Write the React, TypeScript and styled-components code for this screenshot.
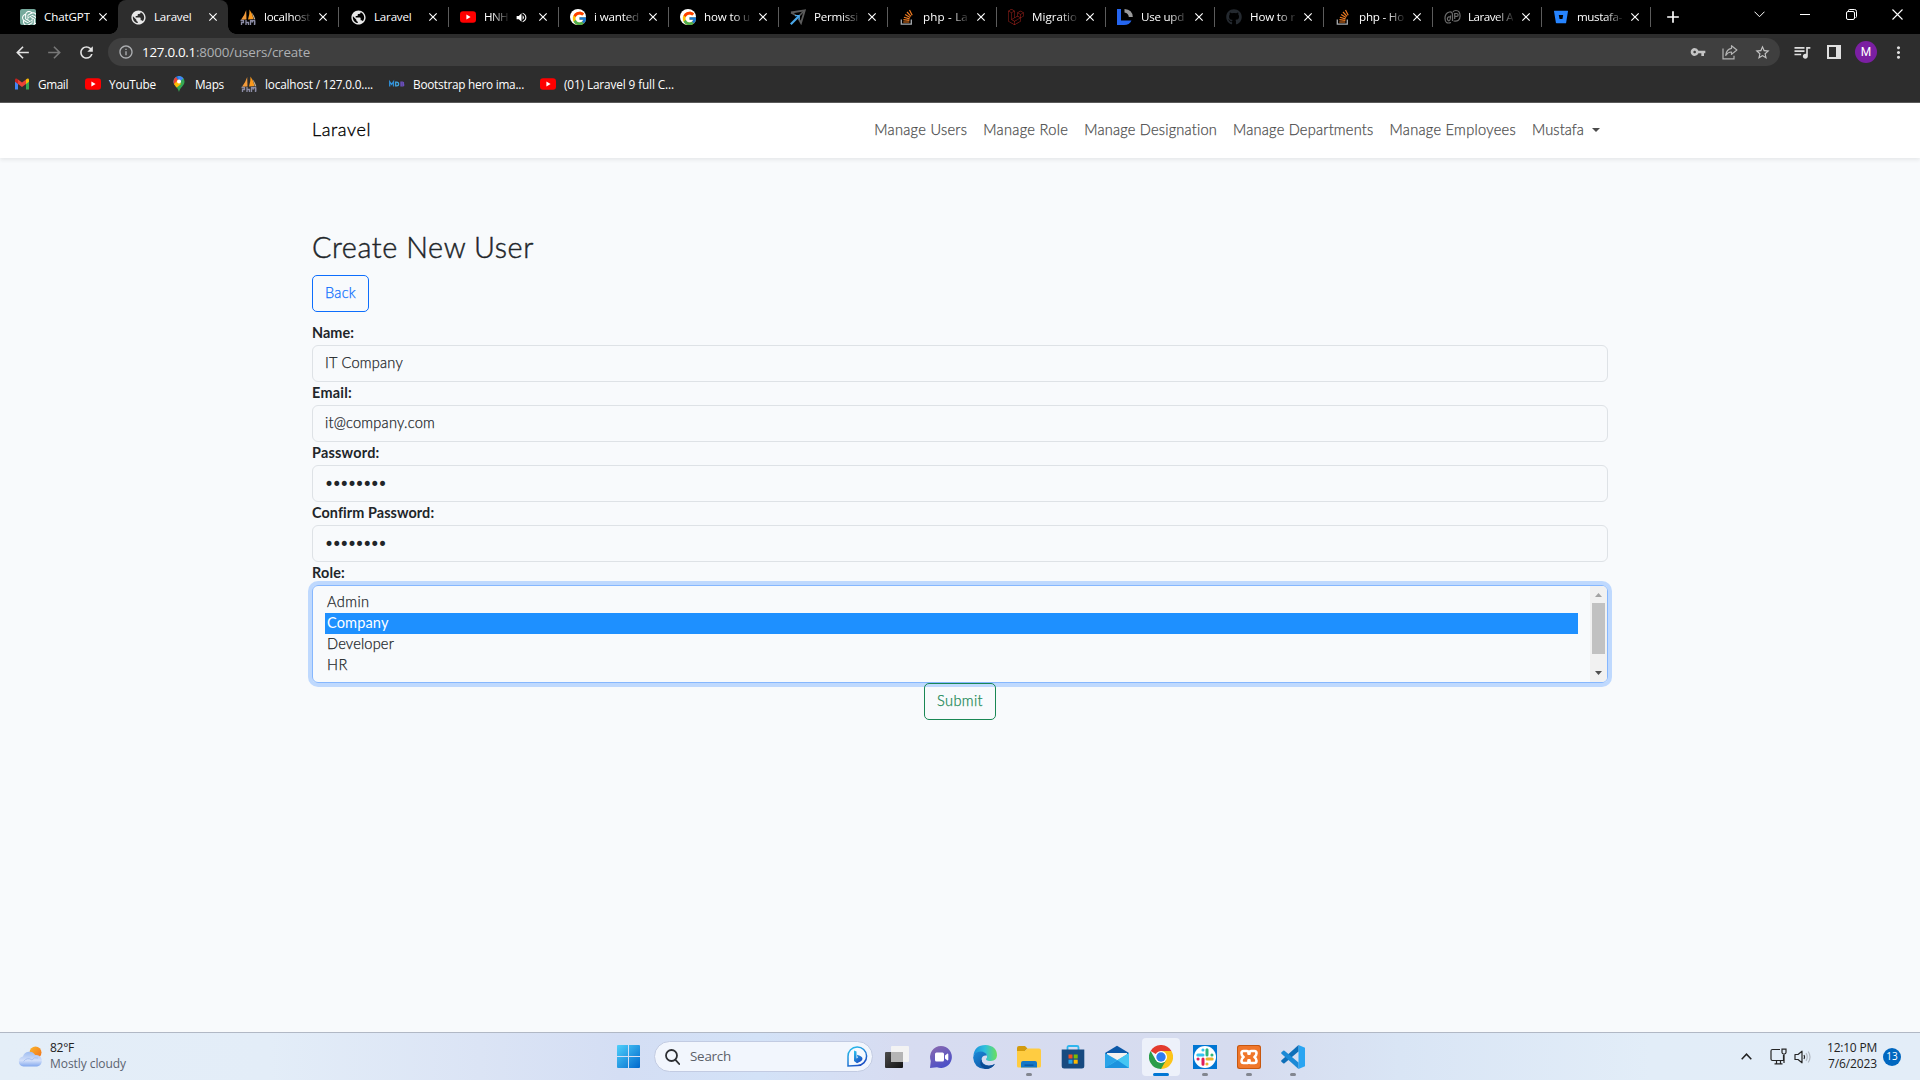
import React, { useLayoutEffect, useRef, useState } from 'react';
import styled, { createGlobalStyle } from 'styled-components';
import {
  MdArrowBack,
  MdArrowForward,
  MdClose,
  MdAdd,
  MdInfoOutline,
  MdMoreVert,
  MdPublic,
  MdQueueMusic,
  MdRefresh,
  MdStarBorder,
  MdVolumeUp,
  MdVpnKey,
} from 'react-icons/md';
import { FcGoogle } from 'react-icons/fc';
import { FaGithub } from 'react-icons/fa';
import { SiBitbucket, SiLaravel, SiOpenai } from 'react-icons/si';

const ui = '"Open Sans", "Noto Sans", sans-serif';
const web = 'Lato, "Open Sans", sans-serif';

const GlobalStyle = createGlobalStyle`
  * { box-sizing: border-box; }
  html, body { margin: 0; padding: 0; overflow: hidden; }
  body { font-family: ${web}; background: #f8fafc; }
  svg { display: block; flex: none; }
`;

/* Text tracked so that it takes the given width */
const TrackedText = styled.span`
  display: inline-block;
  white-space: pre;
  flex: none;
`;

function Tracked({ w, children }: { w: number; children: string }) {
  const ref = useRef<HTMLSpanElement>(null);
  const [spacing, setSpacing] = useState(0);
  useLayoutEffect(() => {
    if (ref.current) {
      const natural = ref.current.getBoundingClientRect().width - spacing * children.length;
      setSpacing((w - natural) / children.length);
    }
  }, [w, children]);
  return (
    <TrackedText ref={ref} style={{ letterSpacing: `${spacing}px` }}>
      {children}
    </TrackedText>
  );
}

const Screen = styled.div`
  width: 1920px;
  height: 1080px;
  display: flex;
  flex-direction: column;
  overflow: hidden;
`;

/* ---------- Browser ---------- */

const TabStrip = styled.div`
  height: 34px;
  flex: none;
  display: flex;
  align-items: stretch;
  padding-left: 8px;
  background: #000;
  font-family: ${ui};
`;

const Tab = styled.div<{ $w: number; $active?: boolean; $line?: boolean }>`
  position: relative;
  width: ${(p) => p.$w}px;
  flex: none;
  display: flex;
  align-items: center;
  padding-left: 12px;
  color: #fff;
  background: ${(p) => (p.$active ? '#2d2d2d' : 'transparent')};
  border-radius: 8px 8px 0 0;
  ${(p) =>
    p.$line &&
    `&::after { content: ''; position: absolute; right: -1px; top: 7px; width: 1px; height: 20px; background: #5c5c5c; }`}
  ${(p) =>
    p.$active &&
    `&::before, &::after { content: ''; position: absolute; bottom: 0; width: 8px; height: 8px; }
     &::before { left: -8px; background: radial-gradient(circle at 0 0, transparent 7.5px, #2d2d2d 8px); }
     &::after { right: -8px; background: radial-gradient(circle at 100% 0, transparent 7.5px, #2d2d2d 8px); }`}
`;

const Favicon = styled.div`
  width: 16px;
  height: 16px;
  display: flex;
  align-items: center;
  justify-content: center;
`;

const TabTitle = styled.div<{ $w: number; $fade?: boolean }>`
  width: ${(p) => p.$w}px;
  margin-left: 8px;
  overflow: hidden;
  font-size: 11.6px;
  line-height: 18px;
  ${(p) => p.$fade && `mask-image: linear-gradient(to right, #000 ${p.$w - 17}px, rgba(0,0,0,.12) 100%);`}
`;

const TabSound = styled.div`
  width: 22px;
  padding-left: 5px;
  display: flex;
  justify-content: center;
`;

const TabClose = styled.div`
  width: 16px;
  margin-left: 5px;
  display: flex;
  justify-content: center;
  font-size: 14px;
`;

const NewTab = styled.div`
  width: 45px;
  display: flex;
  align-items: center;
  justify-content: center;
  color: #fff;
  font-size: 20px;
`;

const WindowControls = styled.div`
  margin-left: auto;
  display: flex;
  height: 28px;
  align-items: center;
  color: #fff;
`;

const WindowControl = styled.div`
  width: 46px;
  display: flex;
  justify-content: center;
`;

const Toolbar = styled.div`
  height: 36px;
  flex: none;
  display: flex;
  align-items: center;
  background: #2d2d2d;
  color: #dedede;
  font-family: ${ui};
`;

const NavButtons = styled.div`
  width: 108px;
  padding-left: 6px;
  display: flex;
`;

const NavButton = styled.div<{ $dim?: boolean }>`
  width: 32px;
  display: flex;
  justify-content: center;
  font-size: 19px;
  color: ${(p) => (p.$dim ? '#777' : '#e4e4e4')};
`;

const AddressBar = styled.div`
  width: 1672px;
  height: 28px;
  border-radius: 14px;
  background: #3f3f3f;
  display: flex;
  align-items: center;
  padding: 0 2px 0 10px;
  font-size: 13.4px;
  color: #aeb0b3;
`;

const Host = styled.span`
  color: #fff;
  margin-left: 8px;
`;

const AddressActions = styled.div`
  margin-left: auto;
  display: flex;
  color: #c4c4c4;
`;

const ToolSlot = styled.div`
  width: 32px;
  display: flex;
  align-items: center;
  justify-content: center;
`;

const ToolActions = styled.div`
  margin-left: 6px;
  display: flex;
  align-items: center;
`;

const Avatar = styled.div`
  width: 22px;
  height: 22px;
  border-radius: 50%;
  background: #7b1fa2;
  color: #fff;
  font: 400 12px/22px Roboto, sans-serif;
  text-align: center;
`;

const Bookmarks = styled.div`
  height: 33px;
  flex: none;
  display: flex;
  align-items: center;
  padding: 0 0 5px 14px;
  background: #2d2d2d;
  border-bottom: 1px solid #5b5b5b;
  color: #fff;
  font: 11.8px/18px ${ui};
`;

const Bookmark = styled.div<{ $w: number }>`
  width: ${(p) => p.$w}px;
  flex: none;
  display: flex;
  align-items: center;
  gap: 8px;
`;

/* ---------- Web page ---------- */

const Page = styled.div`
  height: 929px;
  flex: none;
  background: #f8fafc;
  color: #212529;
  font-size: 14.6px;
  font-weight: 300;
  line-height: 22px;
  -webkit-text-stroke: 0.25px currentColor;
`;

const Navbar = styled.nav`
  height: 55px;
  padding: 0 320px 1px 312px;
  display: flex;
  align-items: center;
  justify-content: space-between;
  background: #fff;
  box-shadow: 0 2px 4px rgba(0, 0, 0, 0.075);
`;

const Brand = styled.div`
  padding-bottom: 2px;
  font-size: 18px;
  color: #000;
  -webkit-text-stroke-width: 0.35px;
`;

const NavLinks = styled.div`
  display: flex;
  gap: 16px;
  color: #4d4d4d;
`;

const Dropdown = styled.div`
  display: flex;
  align-items: center;
  gap: 8px;
`;

const Caret = styled.i`
  border: 4px solid transparent;
  border-top-color: #4b4b4b;
  border-bottom: 0;
`;

const Content = styled.main`
  padding: 72px 312px 0;
`;

const Title = styled.h2`
  margin: 0 0 10px;
  font-size: 28.8px;
  font-weight: 300;
  line-height: 35px;
  -webkit-text-stroke-width: 0.45px;
`;

const OutlineButton = styled.div<{ $w: number; $color: string }>`
  width: ${(p) => p.$w}px;
  height: 37px;
  padding-bottom: 1px;
  display: flex;
  align-items: center;
  justify-content: center;
  border: 1px solid ${(p) => p.$color};
  border-radius: 5px;
  color: ${(p) => p.$color};
`;

const Form = styled.form`
  margin-top: 10px;
  display: flex;
  flex-direction: column;
`;

const Label = styled.label`
  height: 23px;
  font-size: 14.4px;
  font-weight: 700;
  -webkit-text-stroke-width: 0;
`;

const Field = styled.div`
  height: 37px;
  padding: 6px 12px;
  border: 1px solid #dee2e6;
  border-radius: 6px;
`;

const Bullets = styled.div`
  margin-left: -1px;
  font: 17px/25px "DejaVu Sans", sans-serif;
  -webkit-text-stroke-width: 0;
`;

const SelectBox = styled.div`
  height: 98px;
  display: flex;
  border: 1px solid #86b7fe;
  border-radius: 6px;
  box-shadow: 0 0 0 4px #bfd9fe;
  overflow: hidden;
`;

const Options = styled.div`
  flex: 1;
  padding: 6px 12px 0;
`;

const Option = styled.div<{ $selected?: boolean }>`
  height: 21px;
  padding-left: 2px;
  line-height: 20px;
  color: ${(p) => (p.$selected ? '#fff' : '#212529')};
  background: ${(p) => (p.$selected ? '#1e90ff' : 'transparent')};
  ${(p) => p.$selected && 'font-weight: 400; -webkit-text-stroke-width: 0;'}
`;

const Scrollbar = styled.div`
  width: 17px;
  padding: 7px 2px 6px;
  display: flex;
  flex-direction: column;
  align-items: center;
  background: #f1f1f1;
`;

const Thumb = styled.div`
  width: 13px;
  height: 51px;
  margin: 6px 0 17px;
  background: #c1c1c1;
`;

const SubmitRow = styled.div`
  display: flex;
  justify-content: center;
`;

/* ---------- Taskbar ---------- */

const Taskbar = styled.div`
  height: 48px;
  flex: none;
  display: flex;
  align-items: center;
  border-top: 1px solid #b1b8c5;
  background: linear-gradient(90deg, #e4eef8 0, #e3edf8 270px, #dbe4f5 480px, #d4def4 620px, #d3e2f7 760px, #d7dcf1 900px, #d6dcef 1250px, #d9e5f5 1400px, #e2edf8 1650px, #e3edf8 100%);
  font: 12px/16px ${ui};
  color: #222;
`;

const Weather = styled.div`
  width: 611px;
  padding-left: 18px;
  display: flex;
  align-items: center;
  gap: 6px;
`;

const Lines = styled.div<{ $right?: boolean }>`
  padding-bottom: 2px;
  display: flex;
  flex-direction: column;
  align-items: ${(p) => (p.$right ? 'flex-end' : 'flex-start')};
`;

const Muted = styled.span`
  color: #5b6370;
`;

const StartSlot = styled.div`
  width: 43px;
  padding-left: 6px;
`;

const SearchPill = styled.div`
  width: 219px;
  height: 31px;
  display: flex;
  align-items: center;
  padding: 0 4px 0 10px;
  border: 1px solid #c2cbe2;
  border-radius: 16px;
  background: #f2f6fd;
  font-size: 13.4px;
  color: #5c6068;
`;

const SearchText = styled.div`
  flex: 1;
  margin-left: 10px;
  padding-bottom: 1px;
`;

const Apps = styled.div`
  display: flex;
  margin-left: 5px;
  gap: 6px;
`;

const AppSlot = styled.div<{ $active?: boolean }>`
  position: relative;
  width: 38px;
  height: 38px;
  display: flex;
  align-items: center;
  justify-content: center;
  border-radius: 4px;
  background: ${(p) => (p.$active ? '#edf1fa' : 'transparent')};
`;

const Indicator = styled.i<{ $active?: boolean }>`
  position: absolute;
  bottom: 0;
  left: 50%;
  transform: translateX(-50%);
  width: ${(p) => (p.$active ? 16 : 6)}px;
  height: 3px;
  border-radius: 2px;
  background: ${(p) => (p.$active ? '#0076d4' : '#82868f')};
`;

const Tray = styled.div`
  margin-left: auto;
  padding-right: 19px;
  display: flex;
  align-items: center;
`;

const TrayIcons = styled.div`
  display: flex;
  align-items: center;
  margin-right: 16px;
`;

const Gap = styled.div<{ $w: number }>`
  width: ${(p) => p.$w}px;
`;

const Badge = styled.div`
  width: 18px;
  height: 18px;
  margin-left: 6px;
  border-radius: 50%;
  background: #0067c0;
  color: #fff;
  font-size: 10px;
  line-height: 17px;
  text-align: center;
`;

/* ---------- Icons ---------- */

const ChatGptIcon = () => (
  <svg width="16" height="16" viewBox="0 0 16 16">
    <rect width="16" height="16" rx="2" fill="#75a99c" />
    <SiOpenai x={2} y={2} width={12} height={12} color="#fff" />
  </svg>
);

const GlobeIcon = () => <MdPublic size={17} color="#e8e8e8" />;

const SailIcon = () => (
  <svg width="16" height="16" viewBox="0 0 16 16">
    <path d="M6.200 1 6.500 10.500 1 10.800Q4.500 6.500 6.200 1Z" fill="#f29a3a" />
    <path d="M9.500.5Q12.800 5 13.500 10L8 10.400Q9.800 5 9.500.5Z" fill="#f8981d" />
    <path d="M11.500 3Q14.500 7 15.300 10.300L14 10.300Z" fill="#c9b79c" />
    <path d="M.5 11.500h3v2h-2V16M6 11v5M6 13.500h2.500V16M10.500 16v-4.500h1.500v2l1-2h1.500V16M14.800 11.500v4" stroke="#8b8ca5" strokeWidth="1.300" fill="none" />
  </svg>
);

const YouTubeIcon = () => (
  <svg width="16" height="16" viewBox="0 0 16 16">
    <rect y="2.300" width="16" height="11.400" rx="3" fill="#f00" />
    <path d="M6.400 5.600v4.800L10.600 8Z" fill="#fff" />
  </svg>
);

const GoogleIcon = () => (
  <svg width="16" height="16" viewBox="0 0 16 16">
    <circle cx="8" cy="8" r="8" fill="#fff" />
    <FcGoogle x={1.5} y={1.5} width={13} height={13} />
  </svg>
);

const SpatieIcon = () => (
  <svg width="16" height="16" viewBox="0 0 16 16" fill="none">
    <path d="M1 3.500 14.800 1.300 11 14 8.500 9.500" stroke="#5b5b5b" strokeWidth="1.800" />
    <path d="M1 3.500 6 6.500M14.500 1.500 8 8" stroke="#5b5b5b" strokeWidth="1.600" />
    <path d="M.8 15.200 9 7" stroke="#4aa8ea" strokeWidth="2.200" />
    <path d="M5 6.600h4.200v4" stroke="#4aa8ea" strokeWidth="1.200" />
  </svg>
);

const StackIcon = () => (
  <svg width="16" height="16" viewBox="0 0 16 16" fill="none">
    <path d="M2.300 10.500v4.700h10v-4.700" stroke="#a9adb1" strokeWidth="1.300" />
    <path d="M4.300 13h6M4.400 10.700l6 .6M4.900 8.200l5.700 1.700M6.100 5.500l5 3M8 3l4 4.400M10.500 1l2.700 5.300" stroke="#ef7c22" strokeWidth="1.200" />
  </svg>
);

const LogRocketIcon = () => (
  <svg width="16" height="16" viewBox="0 0 16 16">
    <path d="M0 0h4v11.500h10.500Q12.500 16 7 16H0Z" fill="#2566f0" />
    <path d="M7.500 0Q15.500.5 15.800 8h-4Q11.500 4 7.500 3.500Z" fill="#9b9b9b" />
  </svg>
);

const AtIcon = () => (
  <svg width="17" height="16" viewBox="0 0 17 16" fill="none" stroke="#6c6c6c" strokeWidth="1.200">
    <path d="M6.500 8.200a2 2 0 1 0-1.600 3.600q1.500 0 1.700-5.300M7 13.500Q1 15.500 1 9.300 1 4 5.500 3q3-.5 3 3v6" />
    <path d="M10.700 10V4.500h2a1.400 1.400 0 0 1 0 2.900h-2M9.500 12q6.500 1 6.600-5Q16 1.500 12 1.500 9.500 1.500 9 3" />
  </svg>
);

const GmailIcon = () => (
  <svg width="16" height="16" viewBox="0 0 16 16">
    <path d="M1 4v9.500h3V7Z" fill="#4285f4" />
    <path d="M12 7v6.500h3V4Z" fill="#34a853" />
    <path d="M1 4.500V4q.2-2 2-1.200L4 3.500V8L1 5.800Z" fill="#c5221f" />
    <path d="M12 3.500 13 2.800q1.800-.8 2 1.200v1.800L12 8Z" fill="#fbbc04" />
    <path d="M4 3.500 8 6.600l4-3.100V8l-4 3-4-3Z" fill="#ea4335" />
  </svg>
);

const MapsIcon = () => (
  <svg width="16" height="16" viewBox="0 0 16 16">
    <defs>
      <clipPath id="pin">
        <path d="M8 0a5.500 5.500 0 0 0-5.500 5.700C2.500 9.500 6.700 11 8 16 9.300 11 13.500 9.500 13.500 5.700A5.500 5.500 0 0 0 8 0Z" />
      </clipPath>
    </defs>
    <g clipPath="url(#pin)">
      <rect width="16" height="16" fill="#34a853" />
      <path d="M0 0h10L0 11Z" fill="#1a73e8" />
      <path d="M0 1h5l3 4-6 6Z" fill="#ea4335" />
      <path d="M7 0h9L8 6Z" fill="#4285f4" />
      <path d="M2 9 7 4l3 4-6 5Z" fill="#fbbc04" />
    </g>
    <circle cx="8" cy="5.500" r="2" fill="#fff" />
  </svg>
);

const MdbIcon = () => (
  <svg width="16" height="16" viewBox="0 0 16 16" fill="none" strokeWidth="1.300">
    <path d="M.7 10.500V5.800l1.900 2.600 1.900-2.600v4.700" stroke="#2f8fd8" />
    <path d="M6.700 6.200v3.700h1q1.900 0 1.900-1.850t-1.900-1.850Z" stroke="#41a5e0" />
    <path d="M12 6.200v3.700h1.500q1.300 0 1.300-.95t-1.300-.95H12h1.400q1.200 0 1.200-.9t-1.200-.9Z" stroke="#6c4fc0" />
  </svg>
);

const ShareIcon = () => (
  <svg width="16" height="16" viewBox="0 0 16 16" fill="none" stroke="#b4b4b4" strokeWidth="1.200">
    <path d="M1 4.500v10.300h11v-3" />
    <path d="M9.500 1.700 14.900 6 9.500 10.400V8Q6 7.800 3.700 11.300 4.500 5 9.500 4.300Z" strokeLinejoin="round" />
  </svg>
);

const SidePanelIcon = () => (
  <svg width="14" height="14" viewBox="0 0 14 14">
    <path d="M0 0h14v14H0ZM2 2v10h7V2Z" fill="#e0e0e0" fillRule="evenodd" />
  </svg>
);

const CloudIcon = () => (
  <svg width="26" height="22" viewBox="0 0 26 22">
    <defs>
      <linearGradient id="cloud" x1="0" y1="0" x2="0" y2="1">
        <stop offset="0" stopColor="#9fbdf0" />
        <stop offset=".6" stopColor="#d3e0fa" />
        <stop offset="1" stopColor="#82a8ee" />
      </linearGradient>
      <linearGradient id="sun" x1="0" y1="0" x2="1" y2="1">
        <stop offset="0" stopColor="#fbb62b" />
        <stop offset="1" stopColor="#f0701c" />
      </linearGradient>
    </defs>
    <circle cx="17.500" cy="6.500" r="6" fill="url(#sun)" />
    <path d="M5.500 20.500a5 5 0 0 1-.6-9.900 6.700 6.700 0 0 1 12.300-1.500A5.700 5.700 0 0 1 19.100 20.500Z" fill="url(#cloud)" />
    <path d="M5.500 15.500q4-5 8.500-1.500 2-3.500 6-2" stroke="#a9c2f2" fill="none" />
  </svg>
);

const WindowsIcon = () => (
  <svg width="23" height="23" viewBox="0 0 23 23">
    <defs>
      <linearGradient id="win" x1="0" y1="0" x2="1" y2="1">
        <stop offset="0" stopColor="#4fd0fb" />
        <stop offset="1" stopColor="#0067cc" />
      </linearGradient>
    </defs>
    <path d="M1 0h10v11H0V1Q0 0 1 0ZM12 0h10q1 0 1 1v10H12ZM0 12h11v11H1q-1 0-1-1ZM12 12h11v10q0 1-1 1H12Z" fill="url(#win)" />
  </svg>
);

const SearchIcon = () => (
  <svg width="15" height="16" viewBox="0 0 15 16" fill="none" stroke="#2d2f33" strokeWidth="1.800">
    <circle cx="6.500" cy="6.500" r="5.500" />
    <path d="M10.500 10.800 14.200 15" strokeLinecap="round" />
  </svg>
);

const BingIcon = () => (
  <svg width="21" height="21" viewBox="0 0 21 21">
    <defs>
      <linearGradient id="bing" x1="0" y1="0" x2=".6" y2="1">
        <stop offset="0" stopColor="#29c8f0" />
        <stop offset="1" stopColor="#1d50c4" />
      </linearGradient>
    </defs>
    <path d="M1 20V10.500A9.300 9.300 0 1 1 10.500 19.500Z" fill="#f6faff" stroke="url(#bing)" strokeWidth="1.500" />
    <path d="M7 4.500 9.500 5.500v7l1.300-.7-1-3q5.700 1.500 5.700 4 0 1.500-1.600 2.400L10 17.200 7 15Z" fill="url(#bing)" />
  </svg>
);

const TaskViewIcon = () => (
  <svg width="24" height="22" viewBox="0 0 24 22">
    <defs>
      <linearGradient id="tv" x1="0" y1="0" x2="1" y2="1">
        <stop offset="0" stopColor="#4c4c4c" />
        <stop offset="1" stopColor="#141414" />
      </linearGradient>
    </defs>
    <rect y="6" width="18" height="16" rx="1" fill="url(#tv)" />
    <rect x="6" width="18" height="16" rx="1" fill="#f3f3f3" />
    <path d="M6 6h12v10H7q-1 0-1-1Z" fill="#b5b5b5" />
  </svg>
);

const ChatIcon = () => (
  <svg width="24" height="24" viewBox="0 0 24 24">
    <defs>
      <linearGradient id="chat" x1="0" y1="0" x2=".5" y2="1">
        <stop offset="0" stopColor="#8d6bae" />
        <stop offset="1" stopColor="#4c50c7" />
      </linearGradient>
    </defs>
    <path d="M12 1a11 11 0 1 1-4 21.300L1 23l.8-7A11 11 0 0 1 12 1Z" fill="url(#chat)" />
    <rect x="6" y="7.500" width="9" height="9" rx="1.500" fill="#fff" />
    <path d="m16 10.500 2.500-2q.8 0 .8 1v5q0 1-.8 1l-2.500-2Z" fill="#fff" />
  </svg>
);

const EdgeIcon = () => (
  <svg width="24" height="24" viewBox="0 0 24 24">
    <defs>
      <linearGradient id="edge1" x1="0" y1=".4" x2="1" y2=".4">
        <stop offset="0" stopColor="#1b8fdc" />
        <stop offset=".5" stopColor="#2fc0dc" />
        <stop offset="1" stopColor="#6be05b" />
      </linearGradient>
      <linearGradient id="edge2" x1="0" y1="0" x2="1" y2="1">
        <stop offset="0" stopColor="#1a8ad9" />
        <stop offset="1" stopColor="#0c4a98" />
      </linearGradient>
    </defs>
    <path d="M.3 11Q1.500 0 12.500 0 24 .8 24 10.500q-.5 5-6 5.500-5 0-5-2 1.500-1.500 1-3.500Q12.500 7 8 7 2.500 7 .3 11Z" fill="url(#edge1)" />
    <path d="M.1 12.500Q1 6.500 7.500 6.500q5.500.3 6.500 4-5-.8-5.500 4 .5 5.500 7.500 6 3.500 0 6-1.800Q18.500 24 12 24 1 23.500.1 12.500Z" fill="url(#edge2)" />
    <path d="M8.500 14q-.5 6.500 7.500 7 3.500 0 6-2-3 5-9.500 5Q4.500 21 8.500 14Z" fill="#0b4b94" />
  </svg>
);

const FolderIcon = () => (
  <svg width="24" height="22" viewBox="0 0 24 22">
    <path d="M0 2q0-2 2-2h6l2.500 2.500L8 5H0Z" fill="#d39b0e" />
    <path d="M0 5h8l2.500-2.500H22q2 0 2 2V20q0 1.500-1.500 1.500h-21Q0 21.500 0 20Z" fill="#ffcc41" />
    <path d="M4 21.500V17q0-2 2-2h12q2 0 2 2v4.500Z" fill="#1477c6" />
    <path d="M7.500 18.500h9v1.300h-9Z" fill="#0b529c" />
  </svg>
);

const StoreIcon = () => (
  <svg width="24" height="24" viewBox="0 0 24 24">
    <path d="M6.500 5.500v-3q0-1.500 1.500-1.500h8q1.500 0 1.500 1.500v3" fill="none" stroke="#2fb6ee" strokeWidth="1.800" />
    <path d="M.7 4.500h22.600V21q0 2.500-2.500 2.500H3.200Q.7 23.500.7 21Z" fill="#174a80" />
    <path d="M7.500 9.500h4v4h-4Z" fill="#f25022" />
    <path d="M12.700 9.500h4v4h-4Z" fill="#7fba00" />
    <path d="M7.500 14.700h4v4h-4Z" fill="#26a3ea" />
    <path d="M12.700 14.700h4v4h-4Z" fill="#ffb900" />
  </svg>
);

const MailIcon = () => (
  <svg width="24" height="24" viewBox="0 0 24 24">
    <path d="M0 8 12 .8 24 8v3H0Z" fill="#0b58a8" />
    <path d="M2 8h20v3l-10 5.500L2 11Z" fill="#f4f2ef" />
    <path d="m0 8 12.500 7.200L24 8v15H0Z" fill="#2aa4e8" />
    <path d="m24 8L5 19.500 10 23h14Z" fill="#45c6f3" />
    <path d="m0 23 12.500-7.800L24 23Z" fill="#1c93de" />
  </svg>
);

const ChromeIcon = () => (
  <svg width="24" height="24" viewBox="0 0 24 24">
    <path d="M12 12 1.600 6A12 12 0 0 1 22.400 6Z" fill="#e33b2e" />
    <path d="M12 12V6h10.400A12 12 0 0 1 12 24Z" fill="#fcc419" />
    <path d="M1.600 6 6.800 15 12 17.500 17.200 15 12 24A12 12 0 0 1 1.600 6Z" fill="#2a9d4a" />
    <circle cx="12" cy="12" r="6" fill="#fff" />
    <circle cx="12" cy="12" r="4.700" fill="#2f7cf0" />
  </svg>
);

const SlackIcon = () => (
  <svg width="24" height="24" viewBox="0 0 24 24" fill="none" strokeLinecap="round" strokeWidth="3">
    <rect width="24" height="24" fill="#0176d3" />
    <circle cx="12" cy="12" r="11" fill="#fff" />
    <path d="M10 5h-.1M4.800 10h5.200" stroke="#36c5f0" />
    <path d="M14 4.800V10M19 10h-.1" stroke="#2eb67d" />
    <path d="M14 14h5.200M14 19h-.1" stroke="#ecb22e" />
    <path d="M10 14v5.200M5 14h.1" stroke="#e01e5a" />
  </svg>
);

const XamppIcon = () => (
  <svg width="24" height="24" viewBox="0 0 24 24">
    <rect width="24" height="24" rx="2.500" fill="#c7570f" />
    <rect x="1" y="1" width="22" height="22" rx="2" fill="#f0772b" />
    <path
      d="M9.700 6H6.500Q4.500 6 4.500 8.200T6.600 12Q4.500 13.600 4.500 15.800T6.500 18h3.200q1.800 0 1.800-1.800v-1h1v1q0 1.800 1.800 1.800h3.200q2 0 2-2.200T17.400 12q2.100-1.600 2.100-3.800T17.500 6h-3.200q-1.800 0-1.800 1.800v1h-1v-1Q11.500 6 9.700 6Z"
      fill="none"
      stroke="#fff"
      strokeWidth="2.600"
      strokeLinejoin="round"
    />
  </svg>
);

const CodeIcon = () => (
  <svg width="24" height="24" viewBox="0 0 24 24">
    <path d="M17.500 0 24 2.800v18.400L17.500 24Z" fill="#2aa5f2" />
    <path d="m17.500 6.500-14 11.800q-.7.500-1.300 0L.5 16.700q-.7-.8 0-1.500L17.500 0Z" fill="#0f6fb8" />
    <path d="m17.500 17.500-14-11.800q-.7-.5-1.300 0L.5 7.300q-.7.800 0 1.500L17.500 24Z" fill="#1b8ad6" />
  </svg>
);

const MonitorIcon = () => (
  <svg width="17" height="17" viewBox="0 0 17 17" fill="none" stroke="#252525" strokeWidth="1.200">
    <path d="M10 1.500H2.500q-1.500 0-1.500 1.500v8q0 1.500 1.500 1.500h11V7M6.500 12.500v3M10.500 12.500v3M4.500 15.900h8" />
    <path d="M12 1.200h4v3.300q0 1.500-2 1.500t-2-1.500ZM14 6v9" />
  </svg>
);

const SpeakerIcon = () => (
  <svg width="17" height="14" viewBox="0 0 17 14" fill="none" stroke="#252525" strokeWidth="1.200">
    <path d="M1 4.500h3L8 1.200v11.600L4 9.500H1Z" strokeLinejoin="round" />
    <path d="M10 5q1.200 2 0 4" />
    <path d="M12 3.200q2.500 3.800 0 7.600M14.200 1.500q3.600 5.500 0 11" stroke="#b0b7c0" />
  </svg>
);

const ArrowIcon = ({ down, color }: { down?: boolean; color: string }) => (
  <svg width="7" height="4" viewBox="0 0 7 4">
    <path d={down ? 'M0 0h7L3.500 4Z' : 'M0 4h7L3.500 0Z'} fill={color} />
  </svg>
);

/* ---------- Data ---------- */

type TabData = { icon: React.ReactNode; text: string; w: number; fade?: boolean; sound?: boolean };

const tabs: TabData[] = [
  { icon: <ChatGptIcon />, text: 'ChatGPT', w: 46 },
  { icon: <GlobeIcon />, text: 'Laravel', w: 37.5 },
  { icon: <SailIcon />, text: 'localhost', w: 46, fade: true },
  { icon: <GlobeIcon />, text: 'Laravel', w: 37.5 },
  { icon: <YouTubeIcon />, text: 'HNH', w: 24, fade: true, sound: true },
  { icon: <GoogleIcon />, text: 'i wanted', w: 45, fade: true },
  { icon: <GoogleIcon />, text: 'how to u', w: 46, fade: true },
  { icon: <SpatieIcon />, text: 'Permissi', w: 44, fade: true },
  { icon: <StackIcon />, text: 'php - La', w: 45, fade: true },
  { icon: <SiLaravel size={16} color="#a5231c" />, text: 'Migratio', w: 45, fade: true },
  { icon: <LogRocketIcon />, text: 'Use upd', w: 43, fade: true },
  { icon: <FaGithub size={16} color="#24292f" />, text: 'How to r', w: 45, fade: true },
  { icon: <StackIcon />, text: 'php - Ho', w: 45, fade: true },
  { icon: <AtIcon />, text: 'Laravel A', w: 45, fade: true },
  { icon: <SiBitbucket size={14} color="#2684ff" />, text: 'mustafa-', w: 45, fade: true },
];

const bookmarks = [
  { icon: <GmailIcon />, text: 'Gmail', w: 30, slot: 71 },
  { icon: <YouTubeIcon />, text: 'YouTube', w: 47, slot: 86 },
  { icon: <MapsIcon />, text: 'Maps', w: 29, slot: 70 },
  { icon: <SailIcon />, text: 'localhost / 127.0.0....', w: 108, slot: 148 },
  { icon: <MdbIcon />, text: 'Bootstrap hero ima...', w: 111, slot: 151 },
  { icon: <YouTubeIcon />, text: '(01) Laravel 9 full C...', w: 110, slot: 140 },
];

const links: [string, number][] = [
  ['Manage Users', 93],
  ['Manage Role', 85],
  ['Manage Designation', 133],
  ['Manage Departments', 140.5],
  ['Manage Employees', 126.5],
];

const options: [string, number][] = [
  ['Admin', 42.5],
  ['Company', 61.5],
  ['Developer', 67],
  ['HR', 21],
];

const apps: { icon: React.ReactNode; state?: 'open' | 'active' }[] = [
  { icon: <TaskViewIcon /> },
  { icon: <ChatIcon /> },
  { icon: <EdgeIcon /> },
  { icon: <FolderIcon />, state: 'open' },
  { icon: <StoreIcon /> },
  { icon: <MailIcon /> },
  { icon: <ChromeIcon />, state: 'active' },
  { icon: <SlackIcon />, state: 'open' },
  { icon: <XamppIcon />, state: 'open' },
  { icon: <CodeIcon />, state: 'open' },
];

export default function App() {
  return (
    <>
      <GlobalStyle />
      <Screen>
        <TabStrip>
          {tabs.map((t, i) => (
            <Tab key={i} $w={i < 7 ? 110 : 109} $active={i === 1} $line={i > 1}>
              <Favicon>{t.icon}</Favicon>
              <TabTitle $w={t.sound ? 24 : i < 7 ? 46 : 45} $fade={t.fade}>
                <Tracked w={t.w}>{t.text}</Tracked>
              </TabTitle>
              {t.sound && (
                <TabSound>
                  <MdVolumeUp size={13} />
                </TabSound>
              )}
              <TabClose>
                <MdClose />
              </TabClose>
            </Tab>
          ))}
          <NewTab>
            <MdAdd />
          </NewTab>
          <WindowControls>
            <WindowControl>
              <svg width="11" height="7" viewBox="0 0 11 7" fill="none" stroke="#fff">
                <path d="m.5.7 5 5 5-5" />
              </svg>
            </WindowControl>
            <WindowControl>
              <svg width="10" height="1" viewBox="0 0 10 1">
                <path d="M0 0h10v1H0Z" fill="#fff" />
              </svg>
            </WindowControl>
            <WindowControl>
              <svg width="11" height="11" viewBox="0 0 11 11" fill="none" stroke="#fff">
                <rect x=".5" y="2.500" width="8" height="8" rx="1.500" />
                <path d="M2.500 2V1.500q0-1 1-1H8.500q2 0 2 2v5q0 1-1 1" />
              </svg>
            </WindowControl>
            <WindowControl>
              <svg width="11" height="11" viewBox="0 0 11 11" stroke="#fff" strokeWidth="1.100">
                <path d="m.5.5 10 10m0-10-10 10" />
              </svg>
            </WindowControl>
          </WindowControls>
        </TabStrip>

        <Toolbar>
          <NavButtons>
            <NavButton>
              <MdArrowBack />
            </NavButton>
            <NavButton $dim>
              <MdArrowForward />
            </NavButton>
            <NavButton>
              <MdRefresh />
            </NavButton>
          </NavButtons>
          <AddressBar>
            <MdInfoOutline size={16} />
            <Host>
              <Tracked w={54}>127.0.0.1</Tracked>
            </Host>
            <Tracked w={114}>:8000/users/create</Tracked>
            <AddressActions>
              <ToolSlot>
                <MdVpnKey size={16} />
              </ToolSlot>
              <ToolSlot>
                <ShareIcon />
              </ToolSlot>
              <ToolSlot>
                <MdStarBorder size={17} />
              </ToolSlot>
            </AddressActions>
          </AddressBar>
          <ToolActions>
            <ToolSlot>
              <MdQueueMusic size={20} />
            </ToolSlot>
            <ToolSlot>
              <SidePanelIcon />
            </ToolSlot>
            <ToolSlot>
              <Avatar>M</Avatar>
            </ToolSlot>
            <ToolSlot>
              <MdMoreVert size={19} />
            </ToolSlot>
          </ToolActions>
        </Toolbar>

        <Bookmarks>
          {bookmarks.map((b) => (
            <Bookmark key={b.text} $w={b.slot}>
              {b.icon}
              <Tracked w={b.w}>{b.text}</Tracked>
            </Bookmark>
          ))}
        </Bookmarks>

        <Page>
          <Navbar>
            <Brand>
              <Tracked w={59}>Laravel</Tracked>
            </Brand>
            <NavLinks>
              {links.map(([text, w]) => (
                <Tracked key={text} w={w}>
                  {text}
                </Tracked>
              ))}
              <Dropdown>
                <Tracked w={52}>Mustafa</Tracked>
                <Caret />
              </Dropdown>
            </NavLinks>
          </Navbar>
          <Content>
            <Title>
              <Tracked w={222}>Create New User</Tracked>
            </Title>
            <OutlineButton $w={57} $color="#0d6efd">
              <Tracked w={31}>Back</Tracked>
            </OutlineButton>
            <Form>
              <Label>
                <Tracked w={42}>Name:</Tracked>
              </Label>
              <Field>
                <Tracked w={78}>IT Company</Tracked>
              </Field>
              <Label>
                <Tracked w={40}>Email:</Tracked>
              </Label>
              <Field>
                <Tracked w={110}>it@company.com</Tracked>
              </Field>
              <Label>
                <Tracked w={67.5}>Password:</Tracked>
              </Label>
              <Field>
                <Bullets>
                  <Tracked w={61}>••••••••</Tracked>
                </Bullets>
              </Field>
              <Label>
                <Tracked w={122}>Confirm Password:</Tracked>
              </Label>
              <Field>
                <Bullets>
                  <Tracked w={61}>••••••••</Tracked>
                </Bullets>
              </Field>
              <Label>
                <Tracked w={33}>Role:</Tracked>
              </Label>
              <SelectBox>
                <Options>
                  {options.map(([text, w]) => (
                    <Option key={text} $selected={text === 'Company'}>
                      <Tracked w={w}>{text}</Tracked>
                    </Option>
                  ))}
                </Options>
                <Scrollbar>
                  <ArrowIcon color="#a3a3a3" />
                  <Thumb />
                  <ArrowIcon down color="#505050" />
                </Scrollbar>
              </SelectBox>
              <SubmitRow>
                <OutlineButton $w={72} $color="#198754">
                  <Tracked w={46}>Submit</Tracked>
                </OutlineButton>
              </SubmitRow>
            </Form>
          </Content>
        </Page>

        <Taskbar>
          <Weather>
            <CloudIcon />
            <Lines>
              <Tracked w={24}>82°F</Tracked>
              <Muted>
                <Tracked w={76}>Mostly cloudy</Tracked>
              </Muted>
            </Lines>
          </Weather>
          <StartSlot>
            <WindowsIcon />
          </StartSlot>
          <SearchPill>
            <SearchIcon />
            <SearchText>
              <Tracked w={41}>Search</Tracked>
            </SearchText>
            <BingIcon />
          </SearchPill>
          <Apps>
            {apps.map((a, i) => (
              <AppSlot key={i} $active={a.state === 'active'}>
                {a.icon}
                {a.state && <Indicator $active={a.state === 'active'} />}
              </AppSlot>
            ))}
          </Apps>
          <Tray>
            <TrayIcons>
              <svg width="11" height="7" viewBox="0 0 11 7" fill="none" stroke="#222" strokeWidth="1.500">
                <path d="m.7 6.200 4.800-5 4.800 5" />
              </svg>
              <Gap $w={18} />
              <MonitorIcon />
              <Gap $w={7} />
              <SpeakerIcon />
            </TrayIcons>
            <Lines $right>
              <Tracked w={50}>12:10 PM</Tracked>
              <Tracked w={49}>7/6/2023</Tracked>
            </Lines>
            <Badge>13</Badge>
          </Tray>
        </Taskbar>
      </Screen>
    </>
  );
}
